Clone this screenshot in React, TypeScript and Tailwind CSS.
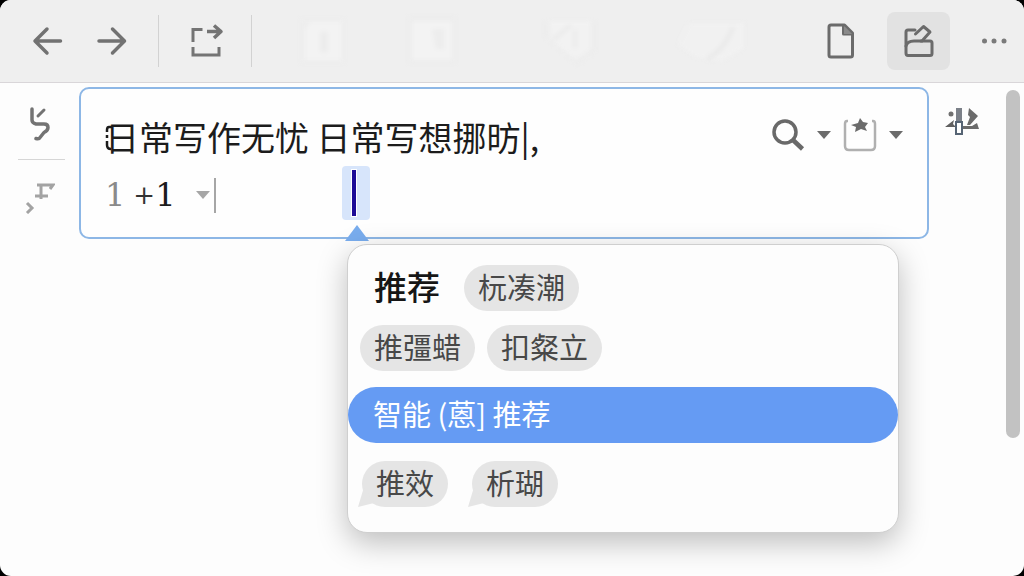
import React, { useState } from "react";

const BackIcon = () => (
  <svg width="32" height="32" viewBox="0 0 32 32" fill="none" stroke="#727272" strokeWidth="3.500" strokeLinecap="round" strokeLinejoin="round">
    <path d="M15 4 3 16 15 28M4 16h24.500" />
  </svg>
);

const ForwardIcon = () => (
  <svg width="32" height="32" viewBox="0 0 32 32" fill="none" stroke="#727272" strokeWidth="3.500" strokeLinecap="round" strokeLinejoin="round">
    <path d="m17.500 4 12 12-12 12M28 16H4" />
  </svg>
);

const ExportIcon = () => (
  <svg width="34" height="34" viewBox="0 0 34 34" fill="none" stroke="#747474" strokeWidth="3">
    <path d="M3 18V5.500h9.500M3 23v8h26v-8" />
    <path d="M17 7.500h13M24 1.500l7 6-7 6.500" strokeLinejoin="round" strokeWidth="3.500" />
  </svg>
);

const FileIcon = () => (
  <svg width="28" height="36" viewBox="0 0 28 36" fill="none" stroke="#6b6b6b" strokeWidth="3" strokeLinejoin="round">
    <path d="M4 2h13.500l8 8v22q0 2-2 2H4q-2 0-2-2V4q0-2 2-2z" />
    <path d="M16.500 3v8h8" strokeWidth="3" />
    <path d="m17 3 8 8h-8z" fill="#8a8a8a" stroke="none" />
  </svg>
);

const ShareIcon = () => (
  <svg width="32" height="34" viewBox="0 0 32 34" fill="none" stroke="#6b6b6b" strokeWidth="3" strokeLinejoin="round" strokeLinecap="round">
    <path d="M12 6H5Q3 6 3 8v21q0 2.500 2 2.500h22q2 0 2-2V19q0-2-2-2h-9" />
    <path d="M3 22c1-4 4-5 8-5h8l8-9-6.500-5.500-8 7.500" />
  </svg>
);

const GhostIcons = () => (
  <svg className="blur-[2px]" width="450" height="50" viewBox="0 0 450 50" aria-hidden="true">
    <rect x="2" y="3" width="43" height="44" fill="#ededed" />
    <path d="M11 6h31v38H6V14z" fill="#f3f3f3" />
    <rect x="21" y="15" width="8" height="22" rx="4" fill="#ececec" />
    <rect x="110" y="1" width="46" height="46" fill="#ececec" />
    <rect x="113" y="5" width="40" height="39" fill="#f3f3f3" />
    <path d="M133 13h12v20h-8z" fill="#ededed" />
    <path d="M246 6h50v28l-18 14-32-28z" fill="#ececec" />
    <path d="M250 5h42v28l-15 11-26-21z" fill="#f2f2f2" />
    <path d="M254 24l18-15M276 14v18" stroke="#ebebeb" strokeWidth="4" />
    <path d="M390 7h55v25l-22 13-26-4-18-12z" fill="#f1f1f1" />
    <path d="M434 11q-8 22-26 32" stroke="#e9e9e9" strokeWidth="4" fill="none" />
  </svg>
);

const UndoGlyph = () => (
  <svg width="24" height="34" viewBox="0 0 24 34" fill="none" stroke="#737373" strokeWidth="3.500" strokeLinecap="round" strokeLinejoin="round">
    <path d="M4 2v11q0 3 4 4h8q4 0 4 3.500 0 3-4 5l-4 5q-1 2-4 1" />
    <path d="m10 9 6-6" strokeWidth="3" />
  </svg>
);

const InsertGlyph = () => (
  <svg width="30" height="32" viewBox="0 0 30 32" fill="none" stroke="#a3a3a3" strokeWidth="3">
    <path d="M12 3h16l-3 4M16 3v14M10 14h13" />
    <path d="m2 21 5 5-5 5" />
  </svg>
);

const SearchIcon = () => (
  <svg width="34" height="34" viewBox="0 0 34 34" fill="none" stroke="#696969" strokeWidth="3.500">
    <circle cx="14" cy="14" r="11" />
    <path d="m22 22 9.500 9" strokeWidth="4.500" />
  </svg>
);

const ClipIcon = () => (
  <svg width="34" height="34" viewBox="0 0 34 34" fill="none">
    <path d="M5 3H4Q2 3 2 6v22q0 4 4 4h22q4 0 4-4V6q0-3-2-3h-1" stroke="#b0b0b0" strokeWidth="2.500" />
    <path d="m17 0 3 4 5 1-3 4 2 4-6-2-6 3 1-5-5-2 7-2z" fill="#6b6b6b" />
  </svg>
);

const PluginGlyph = () => (
  <svg width="36" height="30" viewBox="0 0 36 30">
    <rect x="11" y="1" width="6" height="14" fill="#7b8088" />
    <circle cx="6" cy="7" r="2.500" fill="#707070" />
    <path d="M0 20 9 13l-1 4 3 3z" fill="#606060" />
    <path d="m24 1 9 8-8 9h-3l3-8-2-2z" fill="#6b6b6b" />
    <path d="M18 19h9l5-3 2 6H18z" fill="#6b6b6b" />
    <rect x="11" y="15" width="6" height="12" fill="#fff" stroke="#566474" strokeWidth="2" />
  </svg>
);

const Caret = ({ className = "text-[#6b6b6b]" }: { className?: string }) => (
  <svg className={className} width="14" height="8" viewBox="0 0 14 8" aria-hidden="true">
    <path d="M0 0h14L7 8z" fill="currentColor" />
  </svg>
);

interface ChipProps {
  label: string;
  tail?: boolean;
}

const Chip = ({ label, tail = false }: ChipProps) => (
  <button
    type="button"
    className="relative flex h-[46px] items-start rounded-full bg-[#e5e5e5] px-[14px] text-[29px] leading-[42px] text-[#484848]"
  >
    {tail && (
      <svg className="absolute bottom-0 -left-1 text-[#e5e5e5]" width="20" height="20" viewBox="0 0 20 20" aria-hidden="true">
        <path d="M6 0 0 20l16-4z" fill="currentColor" />
      </svg>
    )}
    <span className="relative">{label}</span>
  </button>
);

const suggestionRows = [
  ["推彊蜡", "扣粲立"],
  ["推效", "析瑚"],
];

const Toolbar = () => (
  <header className="flex h-[83px] items-center gap-[31px] border-b border-[#d9d6d9] bg-[#efefef] pr-4 pl-8">
    <button type="button" aria-label="Back">
      <BackIcon />
    </button>
    <button type="button" aria-label="Forward">
      <ForwardIcon />
    </button>
    <div className="h-[52px] w-px bg-[#d2d2d2]" />
    <button type="button" aria-label="Export">
      <ExportIcon />
    </button>
    <div className="-ml-1 h-[52px] w-px bg-[#d2d2d2]" />
    <div className="flex flex-1 pl-4">
      <GhostIcons />
    </div>
    <div className="flex items-center gap-8">
      <button type="button" aria-label="Document">
        <FileIcon />
      </button>
      <button
        type="button"
        aria-label="Share"
        className="flex h-[58px] w-[63px] items-center justify-center rounded-lg bg-[#e2e2e2]"
      >
        <ShareIcon />
      </button>
      <button type="button" aria-label="More">
        <svg width="26" height="6" viewBox="0 0 26 6" fill="#7a7a7a">
          <circle cx="2.500" cy="3" r="2.500" />
          <circle cx="12" cy="3" r="2.500" />
          <circle cx="22" cy="3" r="2.500" />
        </svg>
      </button>
    </div>
  </header>
);

const SuggestionPopup = () => (
  <div className="absolute top-[155px] left-[266px] w-[552px] rounded-[20px] border border-[#cfcfcf] bg-[#fdfdfd] pt-5 pb-[25px] shadow-[0_10px_30px_rgba(0,0,0,0.25)]">
    <div className="flex items-start gap-6 pl-[26px]">
      <h2 className="text-[33px] leading-[42px] font-medium text-[#161616]">推荐</h2>
      <Chip label="杬凑潮" />
    </div>
    <div className="mt-[14px] flex gap-3 pl-3">
      {suggestionRows[0].map((label) => (
        <Chip key={label} label={label} />
      ))}
    </div>
    <button
      type="button"
      className="mt-4 flex h-14 w-full items-start rounded-full bg-[#659bf3] pl-[25px] text-[29px] leading-[52px] text-white"
    >
      智能 (蒽] 推荐
    </button>
    <div className="mt-[18px] flex gap-6 pl-[14px]">
      {suggestionRows[1].map((label) => (
        <Chip key={label} label={label} tail />
      ))}
    </div>
  </div>
);

const App = () => {
  const [text, setText] = useState("日常写作无忧 日常写想挪昉|,");

  return (
    <div className="min-h-screen bg-black font-['Noto_Sans_CJK_SC',sans-serif]">
      <div className="min-h-screen overflow-hidden rounded-[11px] bg-[#fdfdfd]">
        <Toolbar />

        <main className="flex items-start pt-1">
          <aside className="flex w-[79px] shrink-0 flex-col items-center pt-5 pl-1">
            <button type="button" aria-label="Undo" className="-ml-1">
              <UndoGlyph />
            </button>
            <div className="my-[18px] h-px w-[47px] bg-[#d6d6d6]" />
            <button type="button" aria-label="Insert" className="pt-1 pr-1">
              <InsertGlyph />
            </button>
          </aside>

          <section className="relative h-[152px] min-w-0 flex-1 rounded-[10px] border-2 border-[#8db7e6] bg-[#fefefe] pt-6 pr-6 pl-6">
            <div className="flex items-center">
              <div className="relative min-w-0 flex-1">
                <input
                  aria-label="Text"
                  value={text}
                  onChange={(e) => setText(e.target.value)}
                  className="block h-12 w-full bg-transparent text-[34px] leading-[48px] text-[#1c1c1c] outline-none"
                />
                <svg className="absolute top-3 left-0" width="10" height="26" viewBox="0 0 10 26" fill="none" stroke="#1c1c1c" strokeWidth="2.500" aria-hidden="true">
                  <path d="M8 2H4Q2 2 2 5v2M2 10v3M2 16v4q0 4 4 4" />
                </svg>
              </div>
              <div className="flex items-center gap-3 pb-1">
                <button type="button" aria-label="Search" className="flex items-center gap-3">
                  <SearchIcon />
                  <Caret />
                </button>
                <button type="button" aria-label="Clipboard" className="flex items-center gap-3">
                  <ClipIcon />
                  <Caret />
                </button>
              </div>
            </div>

            <div className="flex h-[68px] items-center font-['DejaVu_Serif',serif] text-[32px] leading-[68px]">
              <span className="text-[#8a8a8a]">1</span>
              <span className="ml-2 text-[26px] text-[#333]">+</span>
              <span className="text-[#1c1c1c]">1</span>
              <Caret className="ml-5 text-[#a6a6a6]" />
              <div className="ml-1 h-[35px] w-0.5 bg-[#a6a6a6]" />
            </div>

            {/* input caret and the pointer of the popup */}
            <div className="absolute top-[77px] left-[261px] flex h-[54px] w-7 items-center justify-center rounded bg-[#d7e5fb] pr-1">
              <div className="h-12 w-1.5 border border-white bg-[#1c0b96]" />
            </div>
            <svg className="absolute top-[136px] left-[264px]" width="24" height="16" viewBox="0 0 24 16" aria-hidden="true">
              <path d="M12 0 24 16H0z" fill="#79adee" />
            </svg>

            <SuggestionPopup />
          </section>

          <aside className="flex w-[95px] shrink-0 justify-between pt-[3px] pr-1 pl-4">
            <button type="button" aria-label="Plugins" className="self-start pt-[17px]">
              <PluginGlyph />
            </button>
            <div className="h-[348px] w-[14px] rounded-full bg-[#c2c2c2]" />
          </aside>
        </main>
      </div>
    </div>
  );
};

export default App;
